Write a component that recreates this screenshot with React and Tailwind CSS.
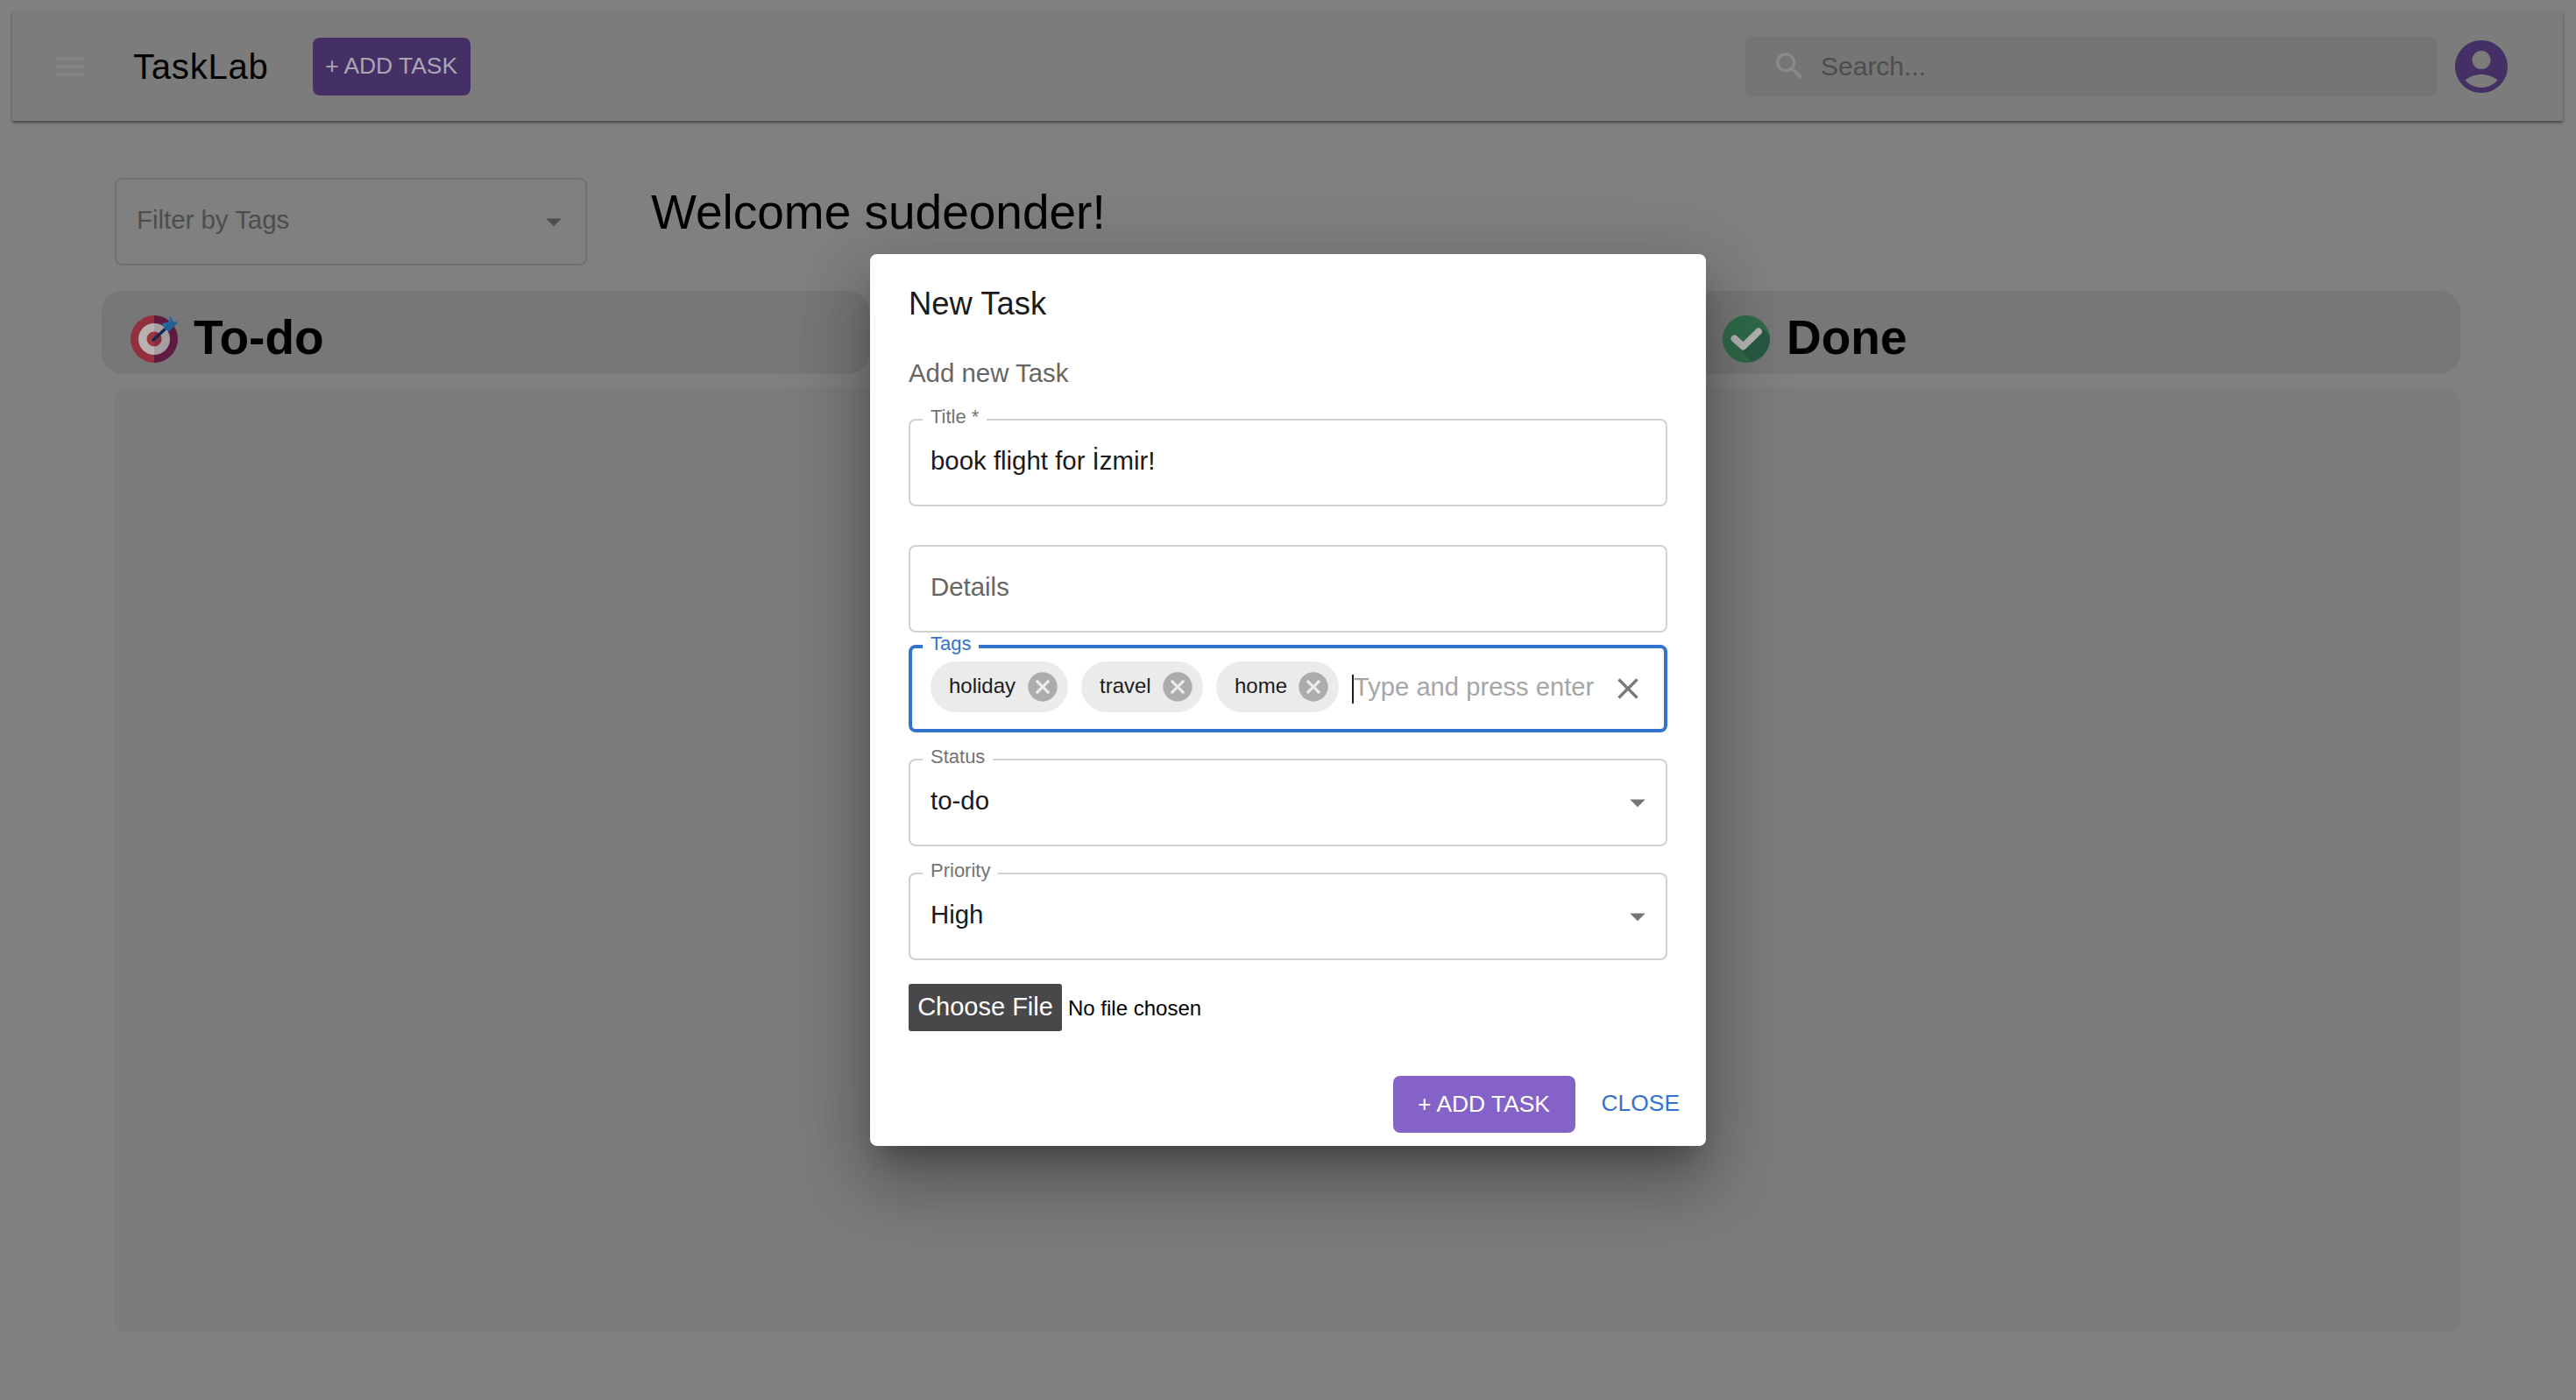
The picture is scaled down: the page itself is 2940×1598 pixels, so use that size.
const SEARCH = "M15.5 14h-.79l-.28-.27C15.41 12.59 16 11.11 16 9.5 16 5.91 13.09 3 9.5 3S3 5.91 3 9.5 5.91 16 9.5 16c1.61 0 3.09-.59 4.23-1.57l.27.28v.79l5 4.99L20.49 19l-4.99-5zm-6 0C7.01 14 5 11.99 5 9.5S7.01 5 9.5 5 14 7.01 14 9.5 11.99 14 9.5 14z";
const ACCOUNT = "M12 2C6.48 2 2 6.48 2 12s4.48 10 10 10 10-4.48 10-10S17.52 2 12 2zm0 4c1.93 0 3.5 1.57 3.5 3.5S13.93 13 12 13s-3.5-1.57-3.5-3.5S10.07 6 12 6zm0 14c-2.03 0-4.43-.82-6.14-2.88C7.55 15.8 9.68 15 12 15s4.45.8 6.14 2.12C16.43 19.18 14.03 20 12 20z";
const CANCEL = "M12 2C6.47 2 2 6.47 2 12s4.47 10 10 10 10-4.47 10-10S17.53 2 12 2zm5 13.59L15.59 17 12 13.41 8.41 17 7 15.59 10.59 12 7 8.41 8.41 7 12 10.59 15.59 7 17 8.41 13.41 12 17 15.59z";
const CLEAR = "M19 6.41L17.59 5 12 10.59 6.41 5 5 6.41 10.59 12 5 17.59 6.41 19 12 13.41 17.59 19 19 17.59 13.41 12z";
const MENU = "M3 18h18v-2H3v2zm0-5h18v-2H3v2zm0-7v2h18V6H3z";
const ARROW = "M7 10l5 5 5-5z";

function Icon({ d, className }) {
  return (
    <svg viewBox="0 0 24 24" className={className} fill="currentColor">
      <path d={d} />
    </svg>
  );
}

function TargetIcon() {
  return (
    <svg viewBox="0 0 54 54" className="w-[54px] h-[54px] shrink-0">
      <path d="M27 0a27 27 0 0 0 0 54z" fill="#92303d" />
      <path d="M27 0a27 27 0 0 1 0 54z" fill="#5f1a40" />
      <path d="M27 9a18 18 0 0 0 0 36z" fill="#b9b0b0" />
      <path d="M27 9a18 18 0 0 1 0 36z" fill="#a79ea1" />
      <path d="M27 18.500a8.500 8.500 0 0 0 0 17z" fill="#9c3642" />
      <path d="M27 18.500a8.500 8.500 0 0 1 0 17z" fill="#8a2c3c" />
      <path d="M26 28L39 16" stroke="#12294f" strokeWidth="3.500" strokeLinecap="round" />
      <path d="M36 9L43 8L45 0L49 7L54 8L47 15L44 18Q38 17 36 9z" fill="#2a6ca8" />
      <path d="M38 15L47 5L49 7L54 8L47 15L44 18z" fill="#245f96" />
    </svg>
  );
}

function DoneIcon() {
  return (
    <svg viewBox="0 0 54 54" className="w-[54px] h-[54px] shrink-0">
      <circle cx="27" cy="27" r="27" fill="#2f6b4a" />
      <path d="M11 29L33 53A27 27 0 0 0 53.500 22L45 14L24 35L15 26z" fill="#275a41" />
      <path d="M13.500 26.500L23.500 35.500L41 18.500" fill="none" stroke="#b3b3b3" strokeWidth="8" strokeLinecap="round" strokeLinejoin="round" />
    </svg>
  );
}

function Field({ label, labelClass = "text-[#737373]", focused, children, className = "" }) {
  return (
    <div className={`relative h-[100px] rounded-lg ${focused ? "border-[4px] border-[#3473cd]" : "border-2 border-[#d0d0d0]"} flex items-center ${className}`}>
      {label && (
        <span className={`absolute ${focused ? "left-[12px] -top-[18px]" : "left-[14px] -top-[17px]"} bg-white px-[9px] text-[22px] leading-[26px] ${labelClass}`}>
          {label}
        </span>
      )}
      {children}
    </div>
  );
}

function Chip({ text, width }) {
  return (
    <span className={`${width} h-[58px] rounded-full bg-[#ebebeb] flex items-center justify-between pl-[21px] pr-[9px] shrink-0`}>
      <span className="text-[24px] text-[#1c1c1c] pb-[2px]">{text}</span>
      <Icon d={CANCEL} className="w-[40px] h-[40px] text-[#acacac]" />
    </span>
  );
}

function SelectField({ label, value, className }) {
  return (
    <Field label={label} className={className}>
      <span className="pl-[23px] pb-[4px] text-[29.4px] text-[#1a1a1a] flex-1">{value}</span>
      <Icon d={ARROW} className="w-[42px] h-[42px] text-[#757575] mr-[11px]" />
    </Field>
  );
}

function Dialog() {
  return (
    <div className="w-[954px] h-[1018px] rounded-lg bg-white px-[44px] pt-[25px] shadow-[0_22px_30px_-14px_rgba(0,0,0,0.3),0_48px_76px_6px_rgba(0,0,0,0.18),0_18px_92px_16px_rgba(0,0,0,0.14)]">
      <h2 className="text-[36.4px] leading-[64px] text-[#1a1a1a]">New Task</h2>
      <p className="mt-[25px] text-[29.4px] leading-[44px] text-[#666666]">Add new Task</p>

      <Field label="Title *" className="mt-[30px]">
        <span className="pl-[23px] pb-[4px] text-[29.4px] text-[#1a1a1a]">book flight for İzmir!</span>
      </Field>

      <Field className="mt-[44px]">
        <span className="pl-[23px] pb-[4px] text-[29.4px] text-[#666666]">Details</span>
      </Field>

      <Field label="Tags" labelClass="text-[#3473cd]" focused className="mt-[14px]">
        <div className="flex items-center w-full pl-[21px] relative h-full">
          <div className="flex items-center gap-[15px] -mt-[4px]">
            <Chip text="holiday" width="w-[157px]" />
            <Chip text="travel" width="w-[139px]" />
            <Chip text="home" width="w-[140px]" />
          </div>
          <span className="ml-[15px] h-[33px] w-[2px] bg-[#222222] shrink-0" />
          <span className="text-[29.2px] text-[#a6a6a6] whitespace-nowrap pb-[2px]">Type and press enter</span>
          <Icon d={CLEAR} className="w-[40px] h-[40px] text-[#777777] ml-[19px] shrink-0" />
        </div>
      </Field>

      <SelectField label="Status" value="to-do" className="mt-[30px]" />
      <SelectField label="Priority" value="High" className="mt-[30px]" />

      <div className="mt-[27px] flex items-center h-[54px]">
        <button className="h-[54px] w-[175px] rounded-[3px] bg-[#48484a] text-white text-[29px]">Choose File</button>
        <span className="ml-[7px] text-[24px] text-black mt-[2px]">No file chosen</span>
      </div>

      <div className="mt-[51px] flex items-center justify-end h-[65px] -mr-[14px]">
        <button className="w-[208px] h-[65px] rounded-lg bg-[#8462c8] text-white text-[26.4px]">+ ADD TASK</button>
        <button className="ml-[30px] text-[#3473cd] text-[26.4px] -mt-[2px]">CLOSE</button>
      </div>
    </div>
  );
}

export default function App() {
  return (
    <div className="relative w-full h-[1598px] overflow-hidden bg-[#808080] font-['Liberation_Sans',Arial,sans-serif]">
      <header className="ml-[14px] mt-[13px] h-[125px] w-[2911px] bg-[#7c7c7c] shadow-[0_2px_3px_0_rgba(0,0,0,0.45)] flex items-center pl-[44px]">
        <Icon d={MENU} className="w-[44px] h-[44px] text-[#848484] shrink-0" />
        <span className="ml-[50px] text-[40px] tracking-[0.8px] text-black">TaskLab</span>
        <button className="ml-[50px] w-[180px] h-[66px] rounded-lg bg-[#453066] text-[#aaa6b2] text-[26.4px]">+ ADD TASK</button>
        <div className="ml-auto w-[789px] h-[70px] rounded-lg bg-[#757575] flex items-center pl-[30px]">
          <Icon d={SEARCH} className="w-[41px] h-[41px] text-[#8a8a8a] shrink-0" />
          <span className="ml-[15px] text-[30px] text-[#4d4d4d]">Search...</span>
        </div>
        <div className="ml-[15px] mr-[57px] w-[72px] h-[72px] shrink-0">
          <Icon d={ACCOUNT} className="w-[72px] h-[72px] text-[#453066]" />
        </div>
      </header>

      <div className="mt-[65px] ml-[131px] flex items-center">
        <div className="w-[539px] h-[100px] rounded-lg border-2 border-[#707070] flex items-center pl-[23px] pr-[15px]">
          <span className="flex-1 pb-[4px] text-[29.4px] text-[#4d4d4d]">Filter by Tags</span>
          <Icon d={ARROW} className="w-[42px] h-[42px] text-[#4d4d4d]" />
        </div>
        <h1 className="ml-[73px] -mt-[22px] text-[55px] text-black">Welcome sudeonder!</h1>
      </div>

      <div className="mt-[29px] ml-[116px] flex gap-[32px]">
        <div className="w-[876px] h-[95px] rounded-[24px] bg-[#777777] flex items-center pl-[33px] pt-[12px] gap-[18px]">
          <div className="mt-[2px]"><TargetIcon /></div>
          <span className="text-[55px] font-bold text-black">To-do</span>
        </div>
        <div className="w-[876px] h-[95px] rounded-[24px] bg-[#777777]" />
        <div className="w-[876px] h-[95px] rounded-[24px] bg-[#777777] flex items-center pl-[34px] pt-[12px] gap-[19px]">
          <div className="mt-[2px]"><DoneIcon /></div>
          <span className="text-[55px] font-bold text-black">Done</span>
        </div>
      </div>

      <div className="mt-[15px] ml-[130px] w-[2678px] h-[1079px] rounded-[16px] bg-[#7c7c7c]" />

      <div className="absolute inset-0 flex items-center justify-center">
        <Dialog />
      </div>
    </div>
  );
}
